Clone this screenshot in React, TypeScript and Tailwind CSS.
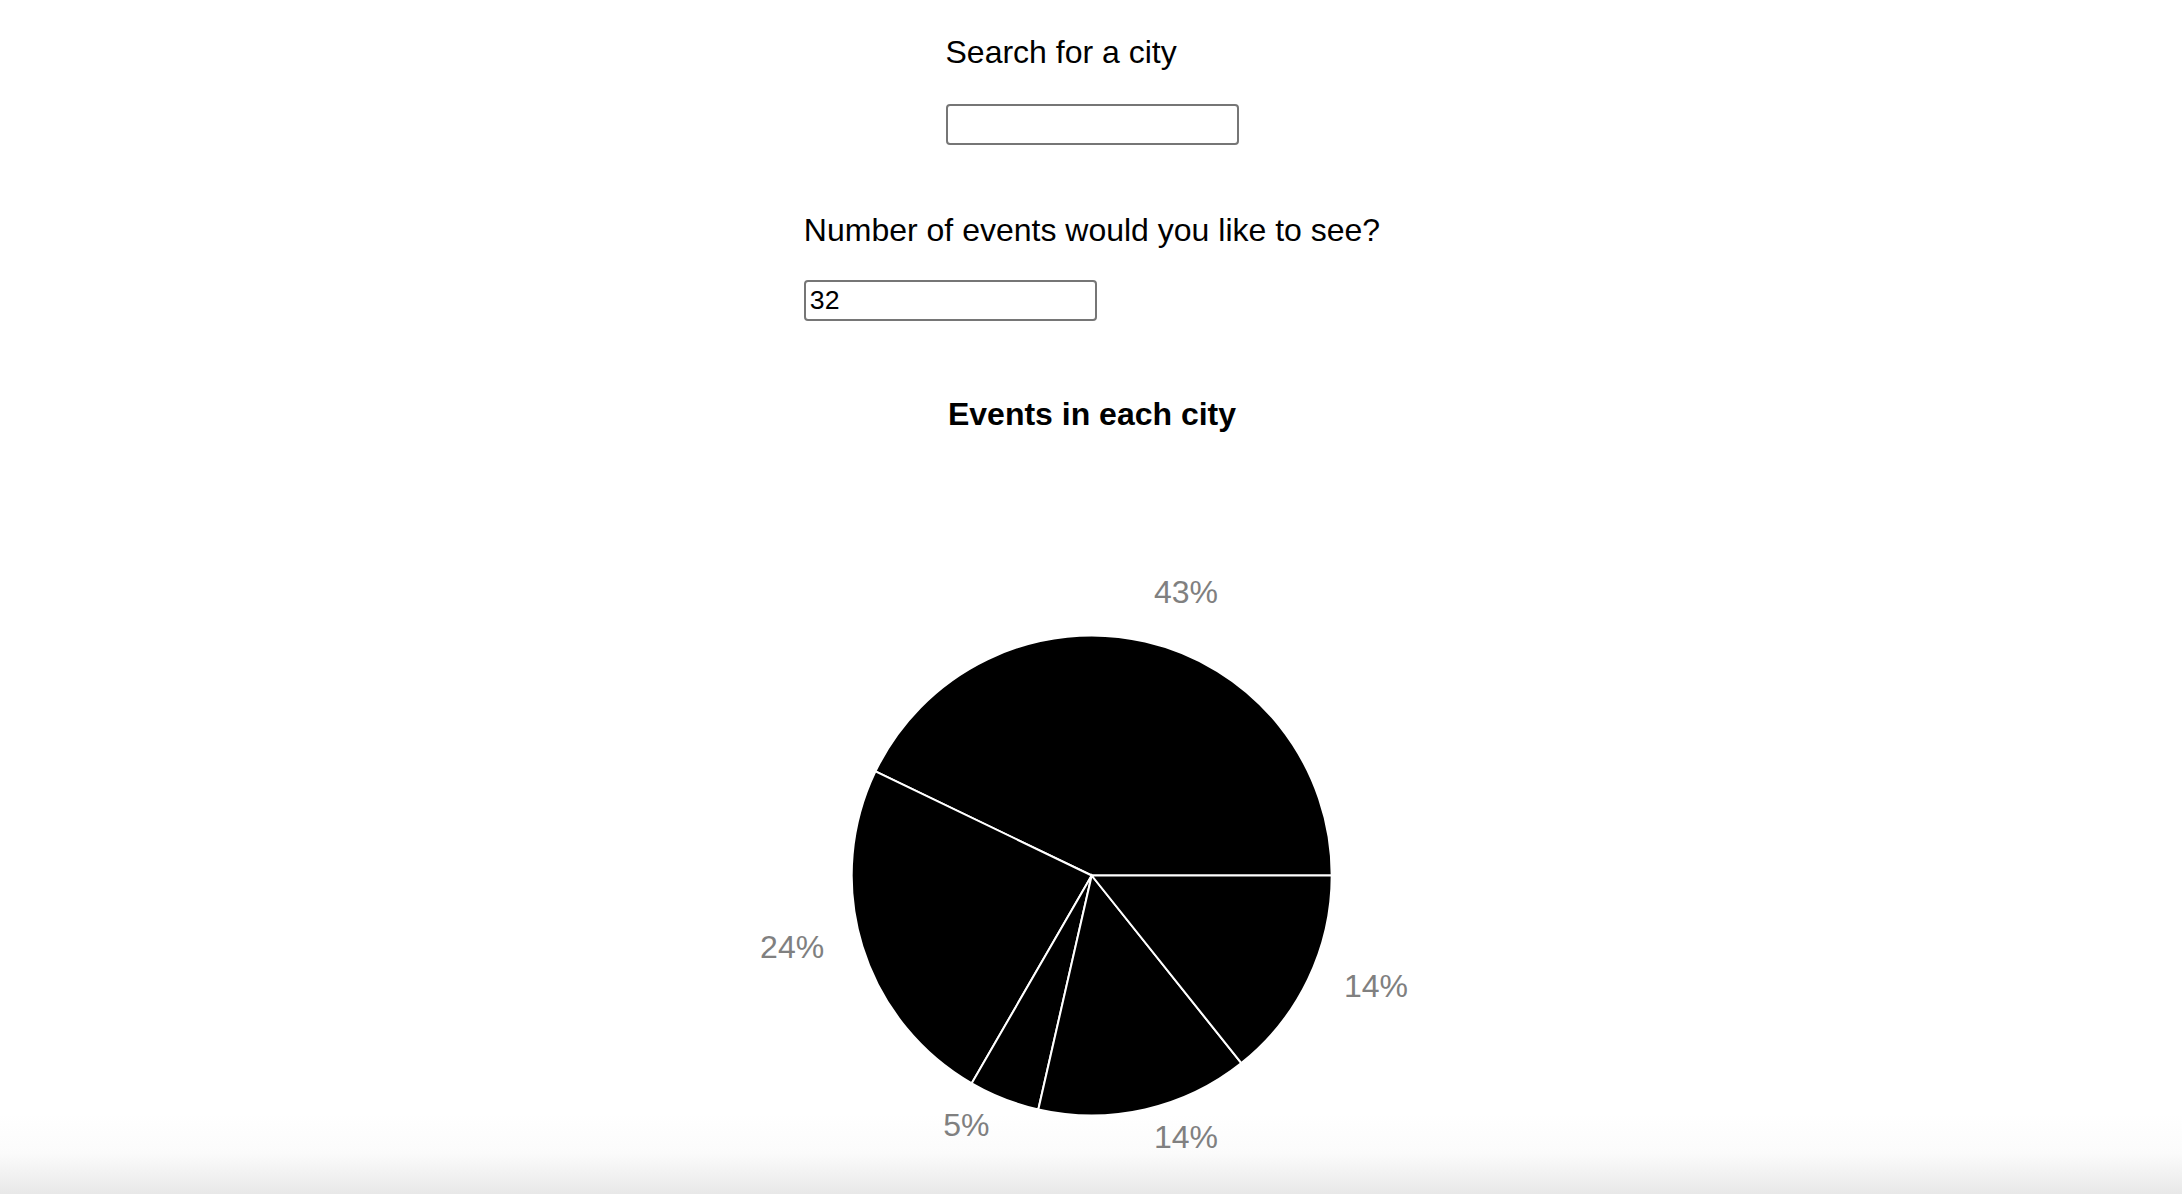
const data = [
  { city: 'Berlin, Germany', count: 9 },
  { city: 'London, UK', count: 5 },
  { city: 'Santiago, Chile', count: 1 },
  { city: 'Munich, Germany', count: 3 },
  { city: 'Toronto, Canada', count: 3 },
];

const WIDTH = 2180;
const HEIGHT = 690;
const CX = 1089.7;
const CY = 400.5;
const RADIUS = 240;
const LABEL_OFFSET = 40;

function polar(r: number, deg: number) {
  const rad = (deg * Math.PI) / 180;
  return { x: CX + r * Math.cos(rad), y: CY - r * Math.sin(rad) };
}

function sectorPath(start: number, end: number) {
  const a = polar(RADIUS, start);
  const b = polar(RADIUS, end);
  const large = end - start > 180 ? 1 : 0;
  return `M ${CX} ${CY} L ${a.x} ${a.y} A ${RADIUS} ${RADIUS} 0 ${large} 0 ${b.x} ${b.y} Z`;
}

function EventsPie() {
  const total = data.reduce((sum, d) => sum + d.count, 0);
  let angle = 0;
  const slices = data.map((d) => {
    const sweep = (d.count / total) * 360;
    const start = angle;
    angle += sweep;
    const mid = start + sweep / 2;
    const labelPos = polar(RADIUS + LABEL_OFFSET, mid);
    return {
      ...d,
      path: sectorPath(start, start + sweep),
      label: `${Math.round((d.count / total) * 100)}%`,
      lx: labelPos.x,
      ly: labelPos.y,
      anchor: labelPos.x > CX ? 'start' : 'end',
    };
  });

  return (
    <svg width={WIDTH} height={HEIGHT} className="block">
      {slices.map((s) => (
        <path key={s.city} d={s.path} fill="#000000" stroke="#ffffff" strokeWidth={2} />
      ))}
      {slices.map((s) => (
        <text
          key={`${s.city}-label`}
          x={s.lx}
          y={s.ly}
          textAnchor={s.anchor}
          fill="#808080"
          fontSize={32}
          fontFamily="'Liberation Sans', Arial, sans-serif"
        >
          {s.label}
        </text>
      ))}
    </svg>
  );
}

export default function App() {
  return (
    <div className="relative h-screen overflow-hidden bg-white text-black font-['Liberation_Sans',Arial,sans-serif]">
      {/* browser bottom fade, sits behind the page content */}
      <div className="pointer-events-none absolute inset-x-0 bottom-0 h-[80px] bg-linear-to-b from-transparent via-[#fbfbfb] to-[#e8e8e8]" />

      <div className="relative z-10 flex flex-col items-center pl-[2px]">
        {/* City search */}
        <div className="mt-[34px] flex flex-col items-start">
          <label className="text-[32px] leading-[37px]">Search for a city</label>
          <input
            type="text"
            className="mt-[33px] h-[41px] w-[293px] rounded-[4px] border-2 border-[#767676] bg-white px-[4px] text-[26.67px] outline-none"
          />
        </div>

        {/* Number of events */}
        <div className="mt-[67px] flex flex-col items-start">
          <label className="text-[32px] leading-[37px]">Number of events would you like to see?</label>
          <input
            type="number"
            defaultValue={32}
            className="mt-[31px] h-[41px] w-[293px] rounded-[4px] border-2 border-[#767676] bg-white px-[4px] text-[26.67px] outline-none [appearance:textfield] [&::-webkit-inner-spin-button]:appearance-none"
          />
        </div>

        {/* Chart */}
        <h3 className="mt-[75px] text-[32px] font-bold leading-[37px]">Events in each city</h3>
        <div className="mt-[42px] w-full">
          <EventsPie />
        </div>
      </div>
    </div>
  );
}
